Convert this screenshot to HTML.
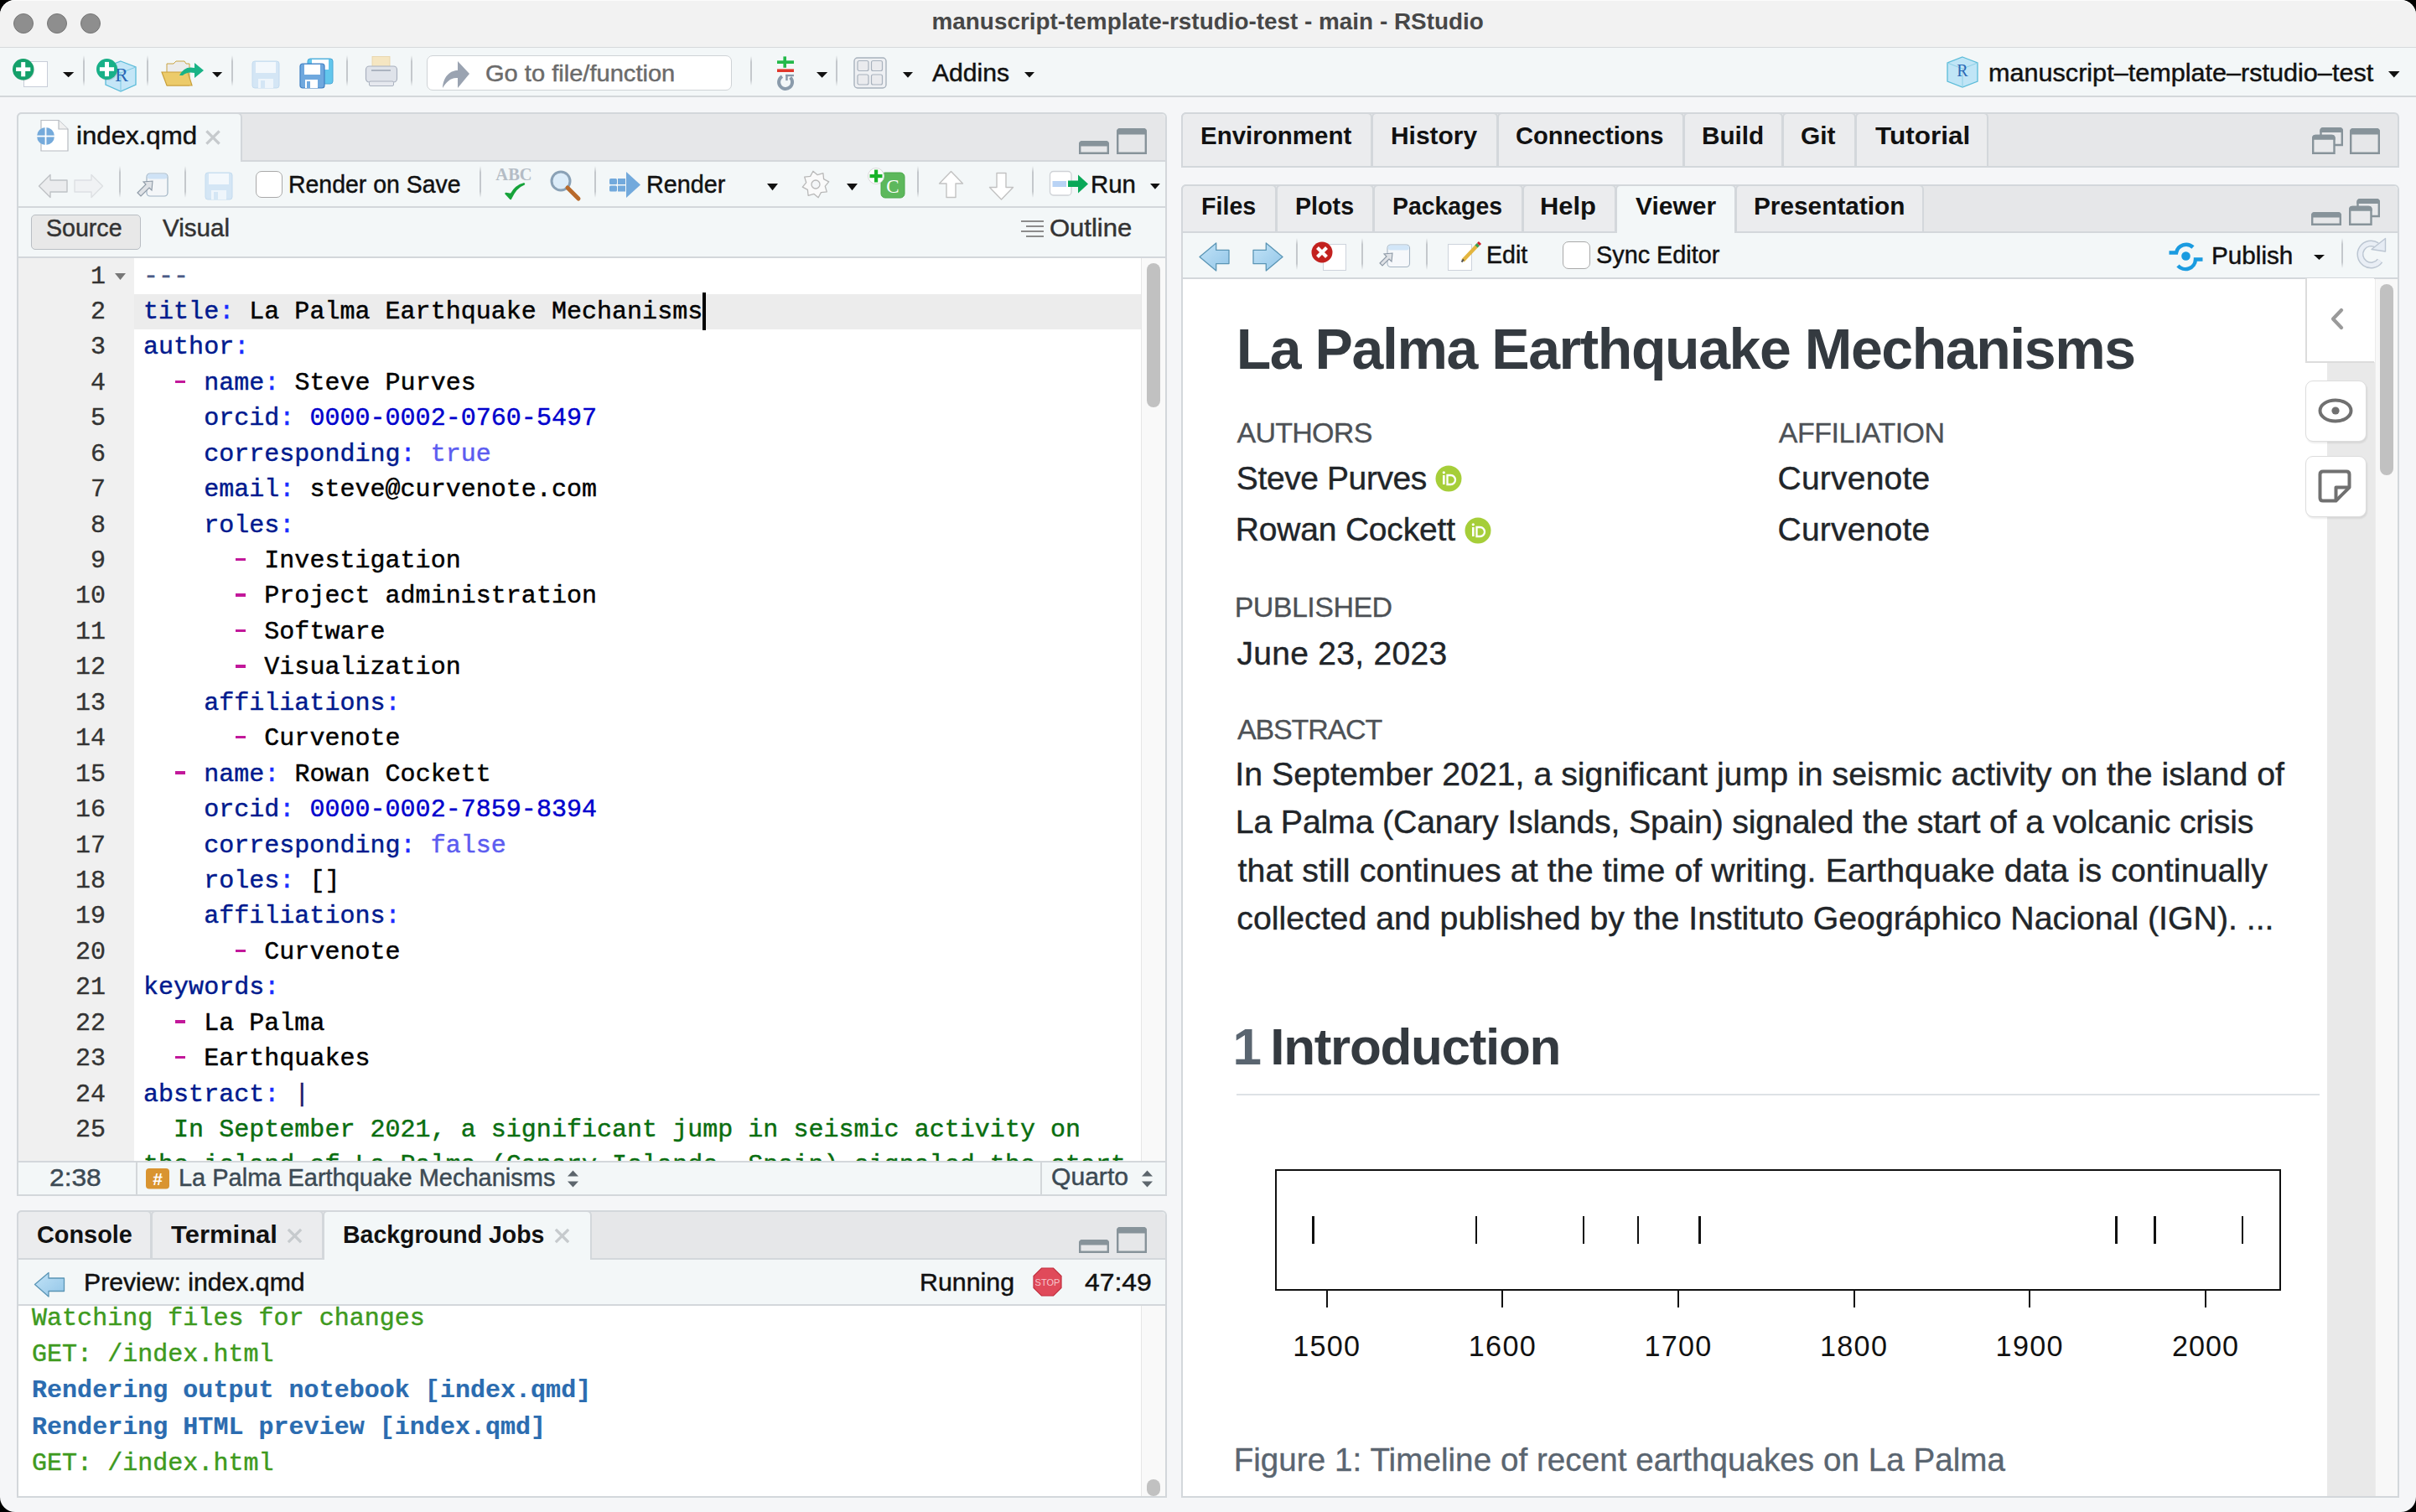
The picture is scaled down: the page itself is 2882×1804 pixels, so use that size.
<!DOCTYPE html>
<html><head><meta charset="utf-8"><title>RStudio</title>
<style>
html,body{margin:0;padding:0;}
body{width:2882px;height:1804px;overflow:hidden;background:#000;position:relative;}
.t{position:absolute;white-space:pre;line-height:1;z-index:5;}
.r{position:absolute;box-sizing:border-box;}
.s{position:absolute;overflow:visible;z-index:4;}
</style></head><body>
<div class="r" style="left:0px;top:0px;width:2882px;height:1804px;background:#f5f6f8;border-radius:18px;"></div>
<div class="r" style="left:0px;top:0px;width:2882px;height:57px;background:#f2f2f2;border-radius:18px 18px 0 0;border-bottom:1.5px solid #d6d9db;border-top:1.5px solid #fbfbfb;"></div>
<div class="r" style="left:16px;top:16px;width:24px;height:24px;border-radius:50%;background:#8e8e8e;border:1px solid #767676;"></div>
<div class="r" style="left:56px;top:16px;width:24px;height:24px;border-radius:50%;background:#8e8e8e;border:1px solid #767676;"></div>
<div class="r" style="left:96px;top:16px;width:24px;height:24px;border-radius:50%;background:#8e8e8e;border:1px solid #767676;"></div>
<div class="t" style="left:1111.56px;top:12.39px;font-size:27.88px;color:#474747;font-family:'Liberation Sans', sans-serif;font-weight:bold;">manuscript-template-rstudio-test - main - RStudio</div>
<div class="r" style="left:0px;top:57px;width:2882px;height:59px;background:#f3f7f8;border-bottom:2px solid #d3d7da;"></div>
<div class="r" style="left:20px;top:134px;width:1372px;height:1293px;background:#f3f7f8;border:2px solid #d3d7db;border-radius:6px 6px 0 0;"></div>
<div class="r" style="left:22px;top:136px;width:1368px;height:56px;background:#e6e7e9;border-radius:5px 5px 0 0;"></div>
<div class="r" style="left:20px;top:191px;width:1372px;height:2px;background:#d3d7db;"></div>
<div class="r" style="left:20px;top:246px;width:1372px;height:2px;background:#d3d7db;"></div>
<div class="r" style="left:20px;top:306px;width:1372px;height:2px;background:#d3d7db;"></div>
<div class="r" style="left:22px;top:308px;width:138px;height:1077px;background:#f0f0f0;"></div>
<div class="r" style="left:160px;top:308px;width:1201px;height:1077px;background:#ffffff;"></div>
<div class="r" style="left:1361px;top:308px;width:29px;height:1077px;background:#f9f9f9;border-left:1px solid #e6e6e6;"></div>
<div class="r" style="left:20px;top:1385px;width:1372px;height:2px;background:#d3d7db;"></div>
<div class="r" style="left:20px;top:1425px;width:1372px;height:2px;background:#d3d7db;"></div>
<div class="r" style="left:20px;top:1444px;width:1372px;height:343px;background:#f3f7f8;border:2px solid #d3d7db;border-radius:6px 6px 0 0;"></div>
<div class="r" style="left:22px;top:1446px;width:1368px;height:56px;background:#e6e7e9;border-radius:5px 5px 0 0;"></div>
<div class="r" style="left:20px;top:1501px;width:1372px;height:2px;background:#d3d7db;"></div>
<div class="r" style="left:20px;top:1556px;width:1372px;height:2px;background:#d3d7db;"></div>
<div class="r" style="left:22px;top:1558px;width:1339px;height:227px;background:#ffffff;"></div>
<div class="r" style="left:1361px;top:1558px;width:29px;height:227px;background:#f9f9f9;border-left:1px solid #e6e6e6;"></div>
<div class="r" style="left:1409px;top:134px;width:1453px;height:66px;background:#e6e7e9;border:2px solid #d3d7db;border-radius:6px 6px 0 0;"></div>
<div class="r" style="left:1409px;top:220px;width:1453px;height:1567px;background:#f3f7f8;border:2px solid #d3d7db;border-radius:6px 6px 0 0;"></div>
<div class="r" style="left:1411px;top:222px;width:1449px;height:55px;background:#e6e7e9;border-radius:5px 5px 0 0;"></div>
<div class="r" style="left:1409px;top:276px;width:1453px;height:2px;background:#d3d7db;"></div>
<div class="r" style="left:1409px;top:331px;width:1453px;height:2px;background:#d3d7db;"></div>
<div class="r" style="left:1411px;top:333px;width:1449px;height:1452px;background:#ffffff;"></div>
<div class="r" style="left:20px;top:134px;width:269px;height:59px;background:#f3f7f8;border:2px solid #d3d7db;border-bottom:none;border-radius:6px 6px 0 0;"></div>
<div class="r" style="left:20px;top:1444px;width:161px;height:59px;background:#ebecee;border:2px solid #d3d7db;border-radius:6px 6px 0 0;"></div>
<div class="r" style="left:180px;top:1444px;width:206px;height:59px;background:#ebecee;border:2px solid #d3d7db;border-radius:6px 6px 0 0;"></div>
<div class="r" style="left:385px;top:1444px;width:321px;height:59px;background:#f3f7f8;border:2px solid #d3d7db;border-bottom:none;border-radius:6px 6px 0 0;"></div>
<div class="r" style="left:1409px;top:134px;width:228px;height:66px;background:#ebecee;border:2px solid #d3d7db;border-radius:6px 6px 0 0;"></div>
<div class="r" style="left:1636px;top:134px;width:151px;height:66px;background:#ebecee;border:2px solid #d3d7db;border-radius:6px 6px 0 0;"></div>
<div class="r" style="left:1786px;top:134px;width:223px;height:66px;background:#ebecee;border:2px solid #d3d7db;border-radius:6px 6px 0 0;"></div>
<div class="r" style="left:2008px;top:134px;width:119px;height:66px;background:#ebecee;border:2px solid #d3d7db;border-radius:6px 6px 0 0;"></div>
<div class="r" style="left:2126px;top:134px;width:88px;height:66px;background:#ebecee;border:2px solid #d3d7db;border-radius:6px 6px 0 0;"></div>
<div class="r" style="left:2213px;top:134px;width:159px;height:66px;background:#ebecee;border:2px solid #d3d7db;border-radius:6px 6px 0 0;"></div>
<div class="r" style="left:1409px;top:220px;width:114px;height:58px;background:#ebecee;border:2px solid #d3d7db;border-radius:6px 6px 0 0;"></div>
<div class="r" style="left:1522px;top:220px;width:117px;height:58px;background:#ebecee;border:2px solid #d3d7db;border-radius:6px 6px 0 0;"></div>
<div class="r" style="left:1638px;top:220px;width:179px;height:58px;background:#ebecee;border:2px solid #d3d7db;border-radius:6px 6px 0 0;"></div>
<div class="r" style="left:1816px;top:220px;width:112px;height:58px;background:#ebecee;border:2px solid #d3d7db;border-radius:6px 6px 0 0;"></div>
<div class="r" style="left:1927px;top:220px;width:144px;height:58px;background:#f3f7f8;border:2px solid #d3d7db;border-bottom:none;border-radius:6px 6px 0 0;"></div>
<div class="r" style="left:2070px;top:220px;width:225px;height:58px;background:#ebecee;border:2px solid #d3d7db;border-radius:6px 6px 0 0;"></div>
<div class="t" style="left:578.54px;top:74.33px;font-size:27.60px;color:#6b6b6b;font-family:'Liberation Sans', sans-serif;transform:scaleX(1.0538);transform-origin:0 0;-webkit-text-stroke:0.45px #6b6b6b;">Go to file/function</div>
<div class="t" style="left:1111.54px;top:71.69px;font-size:29.30px;color:#111;font-family:'Liberation Sans', sans-serif;transform:scaleX(1.0285);transform-origin:0 0;-webkit-text-stroke:0.45px #111;">Addins</div>
<div class="t" style="left:2371.97px;top:71.69px;font-size:29.30px;color:#111;font-family:'Liberation Sans', sans-serif;transform:scaleX(1.0444);transform-origin:0 0;-webkit-text-stroke:0.45px #111;">manuscript–template–rstudio–test</div>
<div class="t" style="left:91.21px;top:147.39px;font-size:29.30px;color:#111;font-family:'Liberation Sans', sans-serif;transform:scaleX(1.0659);transform-origin:0 0;-webkit-text-stroke:0.45px #111;">index.qmd</div>
<div class="t" style="left:343.67px;top:205.19px;font-size:29.30px;color:#111;font-family:'Liberation Sans', sans-serif;transform:scaleX(0.9709);transform-origin:0 0;-webkit-text-stroke:0.45px #111;">Render on Save</div>
<div class="t" style="left:770.64px;top:204.99px;font-size:29.30px;color:#111;font-family:'Liberation Sans', sans-serif;transform:scaleX(0.9816);transform-origin:0 0;-webkit-text-stroke:0.45px #111;">Render</div>
<div class="t" style="left:1300.99px;top:204.99px;font-size:29.30px;color:#111;font-family:'Liberation Sans', sans-serif;transform:scaleX(1.0031);transform-origin:0 0;-webkit-text-stroke:0.45px #111;">Run</div>
<div class="t" style="left:55.30px;top:256.79px;font-size:29.30px;color:#333;font-family:'Liberation Sans', sans-serif;transform:scaleX(0.9756);transform-origin:0 0;-webkit-text-stroke:0.45px #333;">Source</div>
<div class="t" style="left:193.57px;top:256.79px;font-size:29.30px;color:#333;font-family:'Liberation Sans', sans-serif;transform:scaleX(1.0105);transform-origin:0 0;-webkit-text-stroke:0.45px #333;">Visual</div>
<div class="t" style="left:1252.13px;top:257.19px;font-size:29.30px;color:#333;font-family:'Liberation Sans', sans-serif;transform:scaleX(1.0582);transform-origin:0 0;-webkit-text-stroke:0.45px #333;">Outline</div>
<div class="t" style="left:59.40px;top:1390.49px;font-size:29.30px;color:#3c4a54;font-family:'Liberation Sans', sans-serif;transform:scaleX(1.0832);transform-origin:0 0;-webkit-text-stroke:0.45px #3c4a54;">2:38</div>
<div class="t" style="left:212.62px;top:1390.49px;font-size:29.30px;color:#3c4a54;font-family:'Liberation Sans', sans-serif;transform:scaleX(0.9891);transform-origin:0 0;-webkit-text-stroke:0.45px #3c4a54;">La Palma Earthquake Mechanisms</div>
<div class="t" style="left:1254.27px;top:1389.19px;font-size:29.30px;color:#3c4a54;font-family:'Liberation Sans', sans-serif;transform:scaleX(1.0269);transform-origin:0 0;-webkit-text-stroke:0.45px #3c4a54;">Quarto</div>
<div class="t" style="left:43.52px;top:1457.77px;font-size:29.80px;color:#111;font-family:'Liberation Sans', sans-serif;font-weight:bold;transform:scaleX(0.9686);transform-origin:0 0;">Console</div>
<div class="t" style="left:203.65px;top:1457.77px;font-size:29.80px;color:#111;font-family:'Liberation Sans', sans-serif;font-weight:bold;transform:scaleX(1.0405);transform-origin:0 0;">Terminal</div>
<div class="t" style="left:408.70px;top:1457.77px;font-size:29.80px;color:#111;font-family:'Liberation Sans', sans-serif;font-weight:bold;transform:scaleX(0.9554);transform-origin:0 0;">Background Jobs</div>
<div class="t" style="left:100.32px;top:1514.99px;font-size:29.30px;color:#111;font-family:'Liberation Sans', sans-serif;transform:scaleX(1.0311);transform-origin:0 0;-webkit-text-stroke:0.45px #111;">Preview: index.qmd</div>
<div class="t" style="left:1096.81px;top:1514.99px;font-size:29.30px;color:#111;font-family:'Liberation Sans', sans-serif;transform:scaleX(1.0366);transform-origin:0 0;-webkit-text-stroke:0.45px #111;">Running</div>
<div class="t" style="left:1293.77px;top:1514.99px;font-size:29.30px;color:#111;font-family:'Liberation Sans', sans-serif;transform:scaleX(1.0875);transform-origin:0 0;-webkit-text-stroke:0.45px #111;">47:49</div>
<div class="t" style="left:1432.03px;top:147.17px;font-size:29.80px;color:#111;font-family:'Liberation Sans', sans-serif;font-weight:bold;transform:scaleX(0.9901);transform-origin:0 0;">Environment</div>
<div class="t" style="left:1659.00px;top:147.17px;font-size:29.80px;color:#111;font-family:'Liberation Sans', sans-serif;font-weight:bold;transform:scaleX(1.0048);transform-origin:0 0;">History</div>
<div class="t" style="left:1808.40px;top:147.17px;font-size:29.80px;color:#111;font-family:'Liberation Sans', sans-serif;font-weight:bold;transform:scaleX(0.9785);transform-origin:0 0;">Connections</div>
<div class="t" style="left:2029.51px;top:147.17px;font-size:29.80px;color:#111;font-family:'Liberation Sans', sans-serif;font-weight:bold;transform:scaleX(0.9967);transform-origin:0 0;">Build</div>
<div class="t" style="left:2148.37px;top:147.17px;font-size:29.80px;color:#111;font-family:'Liberation Sans', sans-serif;font-weight:bold;transform:scaleX(1.0026);transform-origin:0 0;">Git</div>
<div class="t" style="left:2236.65px;top:147.17px;font-size:29.80px;color:#111;font-family:'Liberation Sans', sans-serif;font-weight:bold;transform:scaleX(1.0573);transform-origin:0 0;">Tutorial</div>
<div class="t" style="left:1432.88px;top:231.47px;font-size:29.80px;color:#111;font-family:'Liberation Sans', sans-serif;font-weight:bold;transform:scaleX(0.9614);transform-origin:0 0;">Files</div>
<div class="t" style="left:1544.68px;top:231.47px;font-size:29.80px;color:#111;font-family:'Liberation Sans', sans-serif;font-weight:bold;transform:scaleX(0.9621);transform-origin:0 0;">Plots</div>
<div class="t" style="left:1661.10px;top:231.47px;font-size:29.80px;color:#111;font-family:'Liberation Sans', sans-serif;font-weight:bold;transform:scaleX(0.9530);transform-origin:0 0;">Packages</div>
<div class="t" style="left:1837.33px;top:231.47px;font-size:29.80px;color:#111;font-family:'Liberation Sans', sans-serif;font-weight:bold;transform:scaleX(1.0365);transform-origin:0 0;">Help</div>
<div class="t" style="left:1950.80px;top:231.47px;font-size:29.80px;color:#111;font-family:'Liberation Sans', sans-serif;font-weight:bold;transform:scaleX(1.0054);transform-origin:0 0;">Viewer</div>
<div class="t" style="left:2092.00px;top:231.47px;font-size:29.80px;color:#111;font-family:'Liberation Sans', sans-serif;font-weight:bold;">Presentation</div>
<div class="t" style="left:1773.46px;top:289.19px;font-size:29.30px;color:#111;font-family:'Liberation Sans', sans-serif;transform:scaleX(0.9734);transform-origin:0 0;-webkit-text-stroke:0.45px #111;">Edit</div>
<div class="t" style="left:1903.69px;top:289.19px;font-size:29.30px;color:#111;font-family:'Liberation Sans', sans-serif;transform:scaleX(0.9837);transform-origin:0 0;-webkit-text-stroke:0.45px #111;">Sync Editor</div>
<div class="t" style="left:2637.56px;top:290.19px;font-size:29.30px;color:#111;font-family:'Liberation Sans', sans-serif;transform:scaleX(1.0131);transform-origin:0 0;-webkit-text-stroke:0.45px #111;">Publish</div>
<div class="r" style="left:160px;top:351px;width:1201px;height:42px;background:#ececec;"></div>
<div class="r" style="left:838px;top:349px;width:4px;height:45px;background:#000;"></div>
<div class="r" style="left:0;top:0;width:2882px;height:1385px;overflow:hidden;clip-path:inset(307px 0 0 0);"><div class="t" style="left:171.0px;top:314.62px;font-family:'Liberation Mono',monospace;font-size:30.0px;letter-spacing:0.030px;-webkit-text-stroke-width:0.45px;"><span style="color:#4a5a86">---</span></div><div class="t" style="left:171.0px;top:357.05px;font-family:'Liberation Mono',monospace;font-size:30.0px;letter-spacing:0.030px;-webkit-text-stroke-width:0.45px;"><span style="color:#001a8e">title</span><span style="color:#1a2cff">:</span><span style="color:#000"> La Palma Earthquake Mechanisms</span></div><div class="t" style="left:171.0px;top:399.48px;font-family:'Liberation Mono',monospace;font-size:30.0px;letter-spacing:0.030px;-webkit-text-stroke-width:0.45px;"><span style="color:#001a8e">author</span><span style="color:#1a2cff">:</span></div><div class="t" style="left:171.0px;top:441.91px;font-family:'Liberation Mono',monospace;font-size:30.0px;letter-spacing:0.030px;-webkit-text-stroke-width:0.45px;"><span style="color:#000">  </span> <span style="color:#000"> </span><span style="color:#001a8e">name</span><span style="color:#1a2cff">:</span><span style="color:#000"> Steve Purves</span></div><div class="t" style="left:171.0px;top:484.34px;font-family:'Liberation Mono',monospace;font-size:30.0px;letter-spacing:0.030px;-webkit-text-stroke-width:0.45px;"><span style="color:#001a8e">    orcid</span><span style="color:#1a2cff">:</span><span style="color:#000"> </span><span style="color:#0000cd">0000-0002-0760-5497</span></div><div class="t" style="left:171.0px;top:526.77px;font-family:'Liberation Mono',monospace;font-size:30.0px;letter-spacing:0.030px;-webkit-text-stroke-width:0.45px;"><span style="color:#001a8e">    corresponding</span><span style="color:#1a2cff">:</span><span style="color:#000"> </span><span style="color:#5c5cf0">true</span></div><div class="t" style="left:171.0px;top:569.20px;font-family:'Liberation Mono',monospace;font-size:30.0px;letter-spacing:0.030px;-webkit-text-stroke-width:0.45px;"><span style="color:#001a8e">    email</span><span style="color:#1a2cff">:</span><span style="color:#000"> steve@curvenote.com</span></div><div class="t" style="left:171.0px;top:611.63px;font-family:'Liberation Mono',monospace;font-size:30.0px;letter-spacing:0.030px;-webkit-text-stroke-width:0.45px;"><span style="color:#001a8e">    roles</span><span style="color:#1a2cff">:</span></div><div class="t" style="left:171.0px;top:654.06px;font-family:'Liberation Mono',monospace;font-size:30.0px;letter-spacing:0.030px;-webkit-text-stroke-width:0.45px;"><span style="color:#000">      </span> <span style="color:#000"> Investigation</span></div><div class="t" style="left:171.0px;top:696.49px;font-family:'Liberation Mono',monospace;font-size:30.0px;letter-spacing:0.030px;-webkit-text-stroke-width:0.45px;"><span style="color:#000">      </span> <span style="color:#000"> Project administration</span></div><div class="t" style="left:171.0px;top:738.92px;font-family:'Liberation Mono',monospace;font-size:30.0px;letter-spacing:0.030px;-webkit-text-stroke-width:0.45px;"><span style="color:#000">      </span> <span style="color:#000"> Software</span></div><div class="t" style="left:171.0px;top:781.35px;font-family:'Liberation Mono',monospace;font-size:30.0px;letter-spacing:0.030px;-webkit-text-stroke-width:0.45px;"><span style="color:#000">      </span> <span style="color:#000"> Visualization</span></div><div class="t" style="left:171.0px;top:823.78px;font-family:'Liberation Mono',monospace;font-size:30.0px;letter-spacing:0.030px;-webkit-text-stroke-width:0.45px;"><span style="color:#001a8e">    affiliations</span><span style="color:#1a2cff">:</span></div><div class="t" style="left:171.0px;top:866.21px;font-family:'Liberation Mono',monospace;font-size:30.0px;letter-spacing:0.030px;-webkit-text-stroke-width:0.45px;"><span style="color:#000">      </span> <span style="color:#000"> Curvenote</span></div><div class="t" style="left:171.0px;top:908.64px;font-family:'Liberation Mono',monospace;font-size:30.0px;letter-spacing:0.030px;-webkit-text-stroke-width:0.45px;"><span style="color:#000">  </span> <span style="color:#000"> </span><span style="color:#001a8e">name</span><span style="color:#1a2cff">:</span><span style="color:#000"> Rowan Cockett</span></div><div class="t" style="left:171.0px;top:951.07px;font-family:'Liberation Mono',monospace;font-size:30.0px;letter-spacing:0.030px;-webkit-text-stroke-width:0.45px;"><span style="color:#001a8e">    orcid</span><span style="color:#1a2cff">:</span><span style="color:#000"> </span><span style="color:#0000cd">0000-0002-7859-8394</span></div><div class="t" style="left:171.0px;top:993.50px;font-family:'Liberation Mono',monospace;font-size:30.0px;letter-spacing:0.030px;-webkit-text-stroke-width:0.45px;"><span style="color:#001a8e">    corresponding</span><span style="color:#1a2cff">:</span><span style="color:#000"> </span><span style="color:#5c5cf0">false</span></div><div class="t" style="left:171.0px;top:1035.93px;font-family:'Liberation Mono',monospace;font-size:30.0px;letter-spacing:0.030px;-webkit-text-stroke-width:0.45px;"><span style="color:#001a8e">    roles</span><span style="color:#1a2cff">:</span><span style="color:#000"> []</span></div><div class="t" style="left:171.0px;top:1078.36px;font-family:'Liberation Mono',monospace;font-size:30.0px;letter-spacing:0.030px;-webkit-text-stroke-width:0.45px;"><span style="color:#001a8e">    affiliations</span><span style="color:#1a2cff">:</span></div><div class="t" style="left:171.0px;top:1120.79px;font-family:'Liberation Mono',monospace;font-size:30.0px;letter-spacing:0.030px;-webkit-text-stroke-width:0.45px;"><span style="color:#000">      </span> <span style="color:#000"> Curvenote</span></div><div class="t" style="left:171.0px;top:1163.22px;font-family:'Liberation Mono',monospace;font-size:30.0px;letter-spacing:0.030px;-webkit-text-stroke-width:0.45px;"><span style="color:#001a8e">keywords</span><span style="color:#1a2cff">:</span></div><div class="t" style="left:171.0px;top:1205.65px;font-family:'Liberation Mono',monospace;font-size:30.0px;letter-spacing:0.030px;-webkit-text-stroke-width:0.45px;"><span style="color:#000">  </span> <span style="color:#000"> La Palma</span></div><div class="t" style="left:171.0px;top:1248.08px;font-family:'Liberation Mono',monospace;font-size:30.0px;letter-spacing:0.030px;-webkit-text-stroke-width:0.45px;"><span style="color:#000">  </span> <span style="color:#000"> Earthquakes</span></div><div class="t" style="left:171.0px;top:1290.51px;font-family:'Liberation Mono',monospace;font-size:30.0px;letter-spacing:0.030px;-webkit-text-stroke-width:0.45px;"><span style="color:#001a8e">abstract</span><span style="color:#1a2cff">:</span><span style="color:#000"> </span><span style="color:#1a1a6e">|</span></div><div class="t" style="left:171.0px;top:1332.94px;font-family:'Liberation Mono',monospace;font-size:30.0px;letter-spacing:0.030px;-webkit-text-stroke-width:0.45px;"><span style="color:#0a6e10">  In September 2021, a significant jump in seismic activity on</span></div><div class="t" style="left:171.0px;top:1375.37px;font-family:'Liberation Mono',monospace;font-size:30.0px;letter-spacing:0.030px;-webkit-text-stroke-width:0.45px;"><span style="color:#0a6e10">the island of La Palma (Canary Islands, Spain) signaled the start</span></div></div>
<div class="r" style="left:208.66px;top:453.69px;width:12.200000000000017px;height:3.3999999999999773px;background:#c2189a;"></div>
<div class="r" style="left:280.78px;top:665.84px;width:12.200000000000045px;height:3.3999999999999773px;background:#c2189a;"></div>
<div class="r" style="left:280.78px;top:708.27px;width:12.200000000000045px;height:3.3999999999999773px;background:#c2189a;"></div>
<div class="r" style="left:280.78px;top:750.7px;width:12.200000000000045px;height:3.3999999999999773px;background:#c2189a;"></div>
<div class="r" style="left:280.78px;top:793.13px;width:12.200000000000045px;height:3.3999999999999773px;background:#c2189a;"></div>
<div class="r" style="left:280.78px;top:877.99px;width:12.200000000000045px;height:3.3999999999999773px;background:#c2189a;"></div>
<div class="r" style="left:208.66px;top:920.42px;width:12.200000000000017px;height:3.400000000000091px;background:#c2189a;"></div>
<div class="r" style="left:280.78px;top:1132.57px;width:12.200000000000045px;height:3.400000000000091px;background:#c2189a;"></div>
<div class="r" style="left:208.66px;top:1217.43px;width:12.200000000000017px;height:3.3999999999998636px;background:#c2189a;"></div>
<div class="r" style="left:208.66px;top:1259.86px;width:12.200000000000017px;height:3.400000000000091px;background:#c2189a;"></div>
<div class="t" style="left:107.97px;top:314.62px;font-family:'Liberation Mono',monospace;font-size:30.0px;letter-spacing:0.030px;color:#333;-webkit-text-stroke-width:0.35px;">1</div>
<div class="t" style="left:107.97px;top:357.05px;font-family:'Liberation Mono',monospace;font-size:30.0px;letter-spacing:0.030px;color:#333;-webkit-text-stroke-width:0.35px;">2</div>
<div class="t" style="left:107.97px;top:399.48px;font-family:'Liberation Mono',monospace;font-size:30.0px;letter-spacing:0.030px;color:#333;-webkit-text-stroke-width:0.35px;">3</div>
<div class="t" style="left:107.97px;top:441.91px;font-family:'Liberation Mono',monospace;font-size:30.0px;letter-spacing:0.030px;color:#333;-webkit-text-stroke-width:0.35px;">4</div>
<div class="t" style="left:107.97px;top:484.34px;font-family:'Liberation Mono',monospace;font-size:30.0px;letter-spacing:0.030px;color:#333;-webkit-text-stroke-width:0.35px;">5</div>
<div class="t" style="left:107.97px;top:526.77px;font-family:'Liberation Mono',monospace;font-size:30.0px;letter-spacing:0.030px;color:#333;-webkit-text-stroke-width:0.35px;">6</div>
<div class="t" style="left:107.97px;top:569.20px;font-family:'Liberation Mono',monospace;font-size:30.0px;letter-spacing:0.030px;color:#333;-webkit-text-stroke-width:0.35px;">7</div>
<div class="t" style="left:107.97px;top:611.63px;font-family:'Liberation Mono',monospace;font-size:30.0px;letter-spacing:0.030px;color:#333;-webkit-text-stroke-width:0.35px;">8</div>
<div class="t" style="left:107.97px;top:654.06px;font-family:'Liberation Mono',monospace;font-size:30.0px;letter-spacing:0.030px;color:#333;-webkit-text-stroke-width:0.35px;">9</div>
<div class="t" style="left:89.94px;top:696.49px;font-family:'Liberation Mono',monospace;font-size:30.0px;letter-spacing:0.030px;color:#333;-webkit-text-stroke-width:0.35px;">10</div>
<div class="t" style="left:89.94px;top:738.92px;font-family:'Liberation Mono',monospace;font-size:30.0px;letter-spacing:0.030px;color:#333;-webkit-text-stroke-width:0.35px;">11</div>
<div class="t" style="left:89.94px;top:781.35px;font-family:'Liberation Mono',monospace;font-size:30.0px;letter-spacing:0.030px;color:#333;-webkit-text-stroke-width:0.35px;">12</div>
<div class="t" style="left:89.94px;top:823.78px;font-family:'Liberation Mono',monospace;font-size:30.0px;letter-spacing:0.030px;color:#333;-webkit-text-stroke-width:0.35px;">13</div>
<div class="t" style="left:89.94px;top:866.21px;font-family:'Liberation Mono',monospace;font-size:30.0px;letter-spacing:0.030px;color:#333;-webkit-text-stroke-width:0.35px;">14</div>
<div class="t" style="left:89.94px;top:908.64px;font-family:'Liberation Mono',monospace;font-size:30.0px;letter-spacing:0.030px;color:#333;-webkit-text-stroke-width:0.35px;">15</div>
<div class="t" style="left:89.94px;top:951.07px;font-family:'Liberation Mono',monospace;font-size:30.0px;letter-spacing:0.030px;color:#333;-webkit-text-stroke-width:0.35px;">16</div>
<div class="t" style="left:89.94px;top:993.50px;font-family:'Liberation Mono',monospace;font-size:30.0px;letter-spacing:0.030px;color:#333;-webkit-text-stroke-width:0.35px;">17</div>
<div class="t" style="left:89.94px;top:1035.93px;font-family:'Liberation Mono',monospace;font-size:30.0px;letter-spacing:0.030px;color:#333;-webkit-text-stroke-width:0.35px;">18</div>
<div class="t" style="left:89.94px;top:1078.36px;font-family:'Liberation Mono',monospace;font-size:30.0px;letter-spacing:0.030px;color:#333;-webkit-text-stroke-width:0.35px;">19</div>
<div class="t" style="left:89.94px;top:1120.79px;font-family:'Liberation Mono',monospace;font-size:30.0px;letter-spacing:0.030px;color:#333;-webkit-text-stroke-width:0.35px;">20</div>
<div class="t" style="left:89.94px;top:1163.22px;font-family:'Liberation Mono',monospace;font-size:30.0px;letter-spacing:0.030px;color:#333;-webkit-text-stroke-width:0.35px;">21</div>
<div class="t" style="left:89.94px;top:1205.65px;font-family:'Liberation Mono',monospace;font-size:30.0px;letter-spacing:0.030px;color:#333;-webkit-text-stroke-width:0.35px;">22</div>
<div class="t" style="left:89.94px;top:1248.08px;font-family:'Liberation Mono',monospace;font-size:30.0px;letter-spacing:0.030px;color:#333;-webkit-text-stroke-width:0.35px;">23</div>
<div class="t" style="left:89.94px;top:1290.51px;font-family:'Liberation Mono',monospace;font-size:30.0px;letter-spacing:0.030px;color:#333;-webkit-text-stroke-width:0.35px;">24</div>
<div class="t" style="left:89.94px;top:1332.94px;font-family:'Liberation Mono',monospace;font-size:30.0px;letter-spacing:0.030px;color:#333;-webkit-text-stroke-width:0.35px;">25</div>
<svg class="s" style="left:137px;top:325.5px;" width="13" height="8.0" viewBox="0 0 13 8.0"><path d="M0 0H13L6.5 8.0Z" fill="#777"/></svg>
<div class="t" style="left:38px;top:1558.02px;font-family:'Liberation Mono',monospace;font-size:30.0px;letter-spacing:0.030px;color:#3e9a1e;font-weight:normal;-webkit-text-stroke-width:0.45px;">Watching files for changes</div>
<div class="t" style="left:38px;top:1601.22px;font-family:'Liberation Mono',monospace;font-size:30.0px;letter-spacing:0.030px;color:#3e9a1e;font-weight:normal;-webkit-text-stroke-width:0.45px;">GET: /index.html</div>
<div class="t" style="left:38px;top:1644.42px;font-family:'Liberation Mono',monospace;font-size:30.0px;letter-spacing:0.030px;color:#2b6cb0;font-weight:bold;-webkit-text-stroke-width:0.2px;">Rendering output notebook [index.qmd]</div>
<div class="t" style="left:38px;top:1687.62px;font-family:'Liberation Mono',monospace;font-size:30.0px;letter-spacing:0.030px;color:#2b6cb0;font-weight:bold;-webkit-text-stroke-width:0.2px;">Rendering HTML preview [index.qmd]</div>
<div class="t" style="left:38px;top:1730.82px;font-family:'Liberation Mono',monospace;font-size:30.0px;letter-spacing:0.030px;color:#3e9a1e;font-weight:normal;-webkit-text-stroke-width:0.45px;">GET: /index.html</div>
<div class="t" style="left:1474.65px;top:382.23px;font-size:68.00px;color:#343a40;font-family:'Liberation Sans', sans-serif;font-weight:bold;letter-spacing:-1.43px;">La Palma Earthquake Mechanisms</div>
<div class="t" style="left:1475.43px;top:499.21px;font-size:34.00px;color:#4d5156;font-family:'Liberation Sans', sans-serif;letter-spacing:-0.72px;-webkit-text-stroke:0.3px #4d5156;">AUTHORS</div>
<div class="t" style="left:2121.73px;top:499.21px;font-size:34.00px;color:#4d5156;font-family:'Liberation Sans', sans-serif;letter-spacing:-0.50px;-webkit-text-stroke:0.3px #4d5156;">AFFILIATION</div>
<div class="t" style="left:1474.83px;top:550.58px;font-size:39.00px;color:#212529;font-family:'Liberation Sans', sans-serif;letter-spacing:-0.40px;-webkit-text-stroke:0.4px #212529;">Steve Purves</div>
<div class="t" style="left:1473.80px;top:611.98px;font-size:39.00px;color:#212529;font-family:'Liberation Sans', sans-serif;letter-spacing:-0.19px;-webkit-text-stroke:0.4px #212529;">Rowan Cockett</div>
<div class="t" style="left:2120.52px;top:550.58px;font-size:39.00px;color:#212529;font-family:'Liberation Sans', sans-serif;letter-spacing:0.22px;-webkit-text-stroke:0.4px #212529;">Curvenote</div>
<div class="t" style="left:2120.52px;top:611.98px;font-size:39.00px;color:#212529;font-family:'Liberation Sans', sans-serif;letter-spacing:0.22px;-webkit-text-stroke:0.4px #212529;">Curvenote</div>
<div class="t" style="left:1472.71px;top:707.21px;font-size:34.00px;color:#4d5156;font-family:'Liberation Sans', sans-serif;letter-spacing:-0.54px;-webkit-text-stroke:0.3px #4d5156;">PUBLISHED</div>
<div class="t" style="left:1475.39px;top:759.78px;font-size:39.00px;color:#212529;font-family:'Liberation Sans', sans-serif;letter-spacing:0.31px;-webkit-text-stroke:0.4px #212529;">June 23, 2023</div>
<div class="t" style="left:1475.93px;top:853.01px;font-size:34.00px;color:#4d5156;font-family:'Liberation Sans', sans-serif;letter-spacing:-1.14px;-webkit-text-stroke:0.3px #4d5156;">ABSTRACT</div>
<div class="t" style="left:1473.37px;top:904.23px;font-size:39.30px;color:#212529;font-family:'Liberation Sans', sans-serif;-webkit-text-stroke:0.4px #212529;">In September 2021, a significant jump in seismic activity on the island of</div>
<div class="t" style="left:1473.78px;top:961.43px;font-size:39.30px;color:#212529;font-family:'Liberation Sans', sans-serif;letter-spacing:-0.18px;-webkit-text-stroke:0.4px #212529;">La Palma (Canary Islands, Spain) signaled the start of a volcanic crisis</div>
<div class="t" style="left:1476.41px;top:1018.63px;font-size:39.30px;color:#212529;font-family:'Liberation Sans', sans-serif;letter-spacing:0.10px;-webkit-text-stroke:0.4px #212529;">that still continues at the time of writing. Earthquake data is continually</div>
<div class="t" style="left:1475.33px;top:1075.83px;font-size:39.30px;color:#212529;font-family:'Liberation Sans', sans-serif;letter-spacing:-0.02px;-webkit-text-stroke:0.4px #212529;">collected and published by the Instituto Geográphico Nacional (IGN). ...</div>
<div class="t" style="left:1470.59px;top:1217.51px;font-size:62.00px;color:#5a6570;font-family:'Liberation Sans', sans-serif;font-weight:bold;">1</div>
<div class="t" style="left:1515.35px;top:1217.51px;font-size:62.00px;color:#343a40;font-family:'Liberation Sans', sans-serif;font-weight:bold;letter-spacing:-1.33px;">Introduction</div>
<div class="r" style="left:1475px;top:1305px;width:1292px;height:2px;background:#dee2e6;"></div>
<div class="r" style="left:1521px;top:1394.5px;width:1200px;height:145.0px;border:2.2px solid #111;"></div>
<div class="r" style="left:1565.4px;top:1450.5px;width:2.599999999999909px;height:33.5px;background:#111;"></div>
<div class="r" style="left:1759.7px;top:1450.5px;width:2.599999999999909px;height:33.5px;background:#111;"></div>
<div class="r" style="left:1887.7px;top:1450.5px;width:2.599999999999909px;height:33.5px;background:#111;"></div>
<div class="r" style="left:1952.7px;top:1450.5px;width:2.599999999999909px;height:33.5px;background:#111;"></div>
<div class="r" style="left:2026.3px;top:1450.5px;width:2.599999999999909px;height:33.5px;background:#111;"></div>
<div class="r" style="left:2523.1px;top:1450.5px;width:2.600000000000364px;height:33.5px;background:#111;"></div>
<div class="r" style="left:2569.2px;top:1450.5px;width:2.600000000000364px;height:33.5px;background:#111;"></div>
<div class="r" style="left:2673.7px;top:1450.5px;width:2.600000000000364px;height:33.5px;background:#111;"></div>
<div class="r" style="left:1581.7px;top:1538px;width:2.199999999999818px;height:22px;background:#111;"></div>
<div class="t" style="left:1542.19px;top:1589.04px;font-size:34.20px;color:#111;font-family:'Liberation Sans', sans-serif;letter-spacing:1.29px;">1500</div>
<div class="r" style="left:1791.3px;top:1538px;width:2.199999999999818px;height:22px;background:#111;"></div>
<div class="t" style="left:1751.79px;top:1589.04px;font-size:34.20px;color:#111;font-family:'Liberation Sans', sans-serif;letter-spacing:1.29px;">1600</div>
<div class="r" style="left:2000.9px;top:1538px;width:2.199999999999818px;height:22px;background:#111;"></div>
<div class="t" style="left:1961.39px;top:1589.04px;font-size:34.20px;color:#111;font-family:'Liberation Sans', sans-serif;letter-spacing:1.29px;">1700</div>
<div class="r" style="left:2210.5px;top:1538px;width:2.199999999999818px;height:22px;background:#111;"></div>
<div class="t" style="left:2170.99px;top:1589.04px;font-size:34.20px;color:#111;font-family:'Liberation Sans', sans-serif;letter-spacing:1.29px;">1800</div>
<div class="r" style="left:2420.1px;top:1538px;width:2.199999999999818px;height:22px;background:#111;"></div>
<div class="t" style="left:2380.59px;top:1589.04px;font-size:34.20px;color:#111;font-family:'Liberation Sans', sans-serif;letter-spacing:1.29px;">1900</div>
<div class="r" style="left:2629.7000000000003px;top:1538px;width:2.199999999999818px;height:22px;background:#111;"></div>
<div class="t" style="left:2591.08px;top:1589.04px;font-size:34.20px;color:#111;font-family:'Liberation Sans', sans-serif;letter-spacing:0.99px;">2000</div>
<div class="t" style="left:1471.63px;top:1723.32px;font-size:38.60px;color:#5a6570;font-family:'Liberation Sans', sans-serif;letter-spacing:0.05px;-webkit-text-stroke:0.35px #5a6570;">Figure 1: Timeline of recent earthquakes on La Palma</div>
<div class="r" style="left:28.3px;top:73px;width:29.099999999999998px;height:31.299999999999997px;background:#fff;border:1.2px solid #c8cdd8;"></div>
<svg class="s" style="left:13.900000000000002px;top:68.7px" width="29.4" height="29.4" viewBox="-13.7 -13.7 29.4 29.4"><circle cx="0.8" cy="0.8" r="12.7" fill="rgba(0,0,0,0.12)"/><circle cx="0" cy="0" r="12.7" fill="#14a06a"/><rect x="-2.5" y="-8.6" width="5" height="17.2" fill="#fff"/><rect x="-8.6" y="-2.3" width="17.2" height="4.6" fill="#fff"/></svg>
<svg class="s" style="left:75px;top:85.7px;" width="13.299999999999997" height="6.299999999999997" viewBox="0 0 13.299999999999997 6.299999999999997"><path d="M0 0H13.299999999999997L6.649999999999999 6.299999999999997Z" fill="#111"/></svg>
<div class="r" style="left:98.5px;top:66px;width:2.0px;height:37px;background:linear-gradient(to bottom, rgba(200,204,208,0), #c4c8cc 20%, #c4c8cc 80%, rgba(200,204,208,0));"></div>
<svg class="s" style="left:125px;top:72px;" width="39" height="39" viewBox="0 0 39 39"><path d="M19 1 L37 8 L37 29 L19 37 L1 29 L1 8 Z" fill="#c4e6f7" stroke="#5bbcd9" stroke-width="1.3"/><path d="M1 8 L19 15 L37 8 M19 15 L19 37" fill="none" stroke="#7cc9e2" stroke-width="1"/><text x="20" y="24.5" font-family="Liberation Serif,serif" font-size="24" fill="#2a68b5" text-anchor="middle">R</text></svg>
<svg class="s" style="left:113.5px;top:68.9px" width="29.0" height="29.0" viewBox="-13.5 -13.5 29.0 29.0"><circle cx="0.8" cy="0.8" r="12.5" fill="rgba(0,0,0,0.12)"/><circle cx="0" cy="0" r="12.5" fill="#18b088"/><rect x="-2.5" y="-8.6" width="5" height="17.2" fill="#fff"/><rect x="-8.6" y="-2.3" width="17.2" height="4.6" fill="#fff"/></svg>
<div class="r" style="left:175px;top:66px;width:2px;height:37px;background:linear-gradient(to bottom, rgba(200,204,208,0), #c4c8cc 20%, #c4c8cc 80%, rgba(200,204,208,0));"></div>
<svg class="s" style="left:192px;top:72px;" width="53" height="33" viewBox="0 0 53 33"><path d="M7 4 L15 4 L18 1 L28 1 L30 4 L34 4 L34 30 L7 30 Z" fill="#ececec" stroke="#c8a240" stroke-width="1"/><path d="M1 14 L32 14 L37 30 L7 30 Z" fill="#eccb6a" stroke="#c9a03c" stroke-width="1.2"/><path d="M22 18 Q28 6 40 9 L40 3 L51 12 L40 21 L40 15 Q31 13 26 18 Z" fill="#19b386"/></svg>
<svg class="s" style="left:252.8px;top:85.8px;" width="12.199999999999989" height="6.200000000000003" viewBox="0 0 12.199999999999989 6.200000000000003"><path d="M0 0H12.199999999999989L6.099999999999994 6.200000000000003Z" fill="#111"/></svg>
<div class="r" style="left:275.5px;top:66px;width:2.0px;height:37px;background:linear-gradient(to bottom, rgba(200,204,208,0), #c4c8cc 20%, #c4c8cc 80%, rgba(200,204,208,0));"></div>
<svg class="s" style="left:300px;top:72px;" width="34" height="34" viewBox="0 0 34 34"><rect x="1" y="1" width="32" height="32" rx="3" fill="#d4e6f5" stroke="#c3dbef"/><rect x="5" y="2" width="24" height="13" fill="#f3f8fc"/><rect x="8" y="22" width="18" height="11" fill="#eef5fb"/><rect x="11" y="24" width="5" height="9" fill="#d4e6f5"/></svg>
<svg class="s" style="left:356px;top:69px;" width="43" height="38" viewBox="0 0 43 38"><rect x="11" y="1" width="30" height="30" rx="3" fill="#62c6ec" stroke="#4aa7d6"/><rect x="16" y="2" width="20" height="12" fill="#fff"/><rect x="2" y="7" width="29" height="29" rx="3" fill="#6fa8de" stroke="#3f7fc2" stroke-width="1.2"/><rect x="7" y="8" width="19" height="12" fill="#fff"/><rect x="8" y="26" width="15" height="10" fill="#fff"/><rect x="10" y="28" width="4" height="8" fill="#6fa8de"/></svg>
<div class="r" style="left:413.3px;top:66px;width:2.0px;height:37px;background:linear-gradient(to bottom, rgba(200,204,208,0), #c4c8cc 20%, #c4c8cc 80%, rgba(200,204,208,0));"></div>
<svg class="s" style="left:435px;top:66px;" width="40" height="38" viewBox="0 0 40 38"><rect x="9" y="1.5" width="21" height="18" fill="#f5e6c2" stroke="#e6d2a4" stroke-width="0.8"/><rect x="1.5" y="13" width="37" height="19" rx="4" fill="#dfe3ea" stroke="#a9b1bf" stroke-width="1.2"/><line x1="8" y1="18" x2="31" y2="18" stroke="#8a93a3" stroke-width="1.2"/><rect x="5.5" y="31" width="29" height="5.5" rx="1.5" fill="#e6e9ef" stroke="#aab2bf" stroke-width="1"/></svg>
<div class="r" style="left:490px;top:66px;width:2px;height:37px;background:linear-gradient(to bottom, rgba(200,204,208,0), #c4c8cc 20%, #c4c8cc 80%, rgba(200,204,208,0));"></div>
<div class="r" style="left:509px;top:66px;width:364px;height:42px;background:#fff;border:1.5px solid #cfd3d6;border-radius:7px;"></div>
<svg class="s" style="left:526px;top:72px;" width="36" height="34" viewBox="0 0 36 34"><path d="M2 33 C3 18 12 12 20 12 L20 1 L34 16 L20 33 L20 21 C12 20 6 26 2 33 Z" fill="#9aa3b1"/></svg>
<div class="r" style="left:895px;top:67px;width:2px;height:35px;background:linear-gradient(to bottom, rgba(200,204,208,0), #c4c8cc 20%, #c4c8cc 80%, rgba(200,204,208,0));"></div>
<svg class="s" style="left:925px;top:66px;" width="24" height="43" viewBox="0 0 24 43"><rect x="9.4" y="1.4" width="3.6" height="13.4" fill="#23b94a"/><rect x="2" y="6.3" width="20" height="3.7" fill="#23b94a"/><rect x="2" y="16.4" width="20" height="3.6" fill="#e0382c"/><path d="M8 25.1 A8 8 0 1 0 17.7 26.3" fill="none" stroke="#8a9bab" stroke-width="4"/><rect x="12.2" y="22.9" width="9.8" height="2.3" fill="#8a9bab"/><rect x="12.2" y="22.9" width="2.5" height="7.2" fill="#8a9bab"/></svg>
<svg class="s" style="left:973.8px;top:85.8px;" width="13.200000000000045" height="6.700000000000003" viewBox="0 0 13.200000000000045 6.700000000000003"><path d="M0 0H13.200000000000045L6.600000000000023 6.700000000000003Z" fill="#111"/></svg>
<div class="r" style="left:997px;top:66px;width:2px;height:37px;background:linear-gradient(to bottom, rgba(200,204,208,0), #c4c8cc 20%, #c4c8cc 80%, rgba(200,204,208,0));"></div>
<svg class="s" style="left:1018px;top:68px;" width="41" height="38" viewBox="0 0 41 38"><rect x="1" y="1" width="38" height="36" rx="4" fill="#eef0f3" stroke="#a8b2bd" stroke-width="1.4"/><rect x="5" y="4.5" width="13" height="12" rx="2" fill="#eaebee" stroke="#a8b2bd" stroke-width="1.2"/><rect x="21.5" y="4.5" width="13" height="12" rx="2" fill="#eaebee" stroke="#a8b2bd" stroke-width="1.2"/><rect x="5" y="21" width="13" height="12" rx="2" fill="#eaebee" stroke="#a8b2bd" stroke-width="1.2"/><rect x="21.5" y="21" width="13" height="12" rx="2" fill="#eaebee" stroke="#a8b2bd" stroke-width="1.2"/></svg>
<svg class="s" style="left:1077px;top:85.8px;" width="12" height="6.700000000000003" viewBox="0 0 12 6.700000000000003"><path d="M0 0H12L6.0 6.700000000000003Z" fill="#111"/></svg>
<svg class="s" style="left:1222px;top:85.5px;" width="12" height="6.5" viewBox="0 0 12 6.5"><path d="M0 0H12L6.0 6.5Z" fill="#111"/></svg>
<svg class="s" style="left:2322px;top:67px;" width="40" height="39" viewBox="0 0 40 39"><path d="M19 1 L37 8 L37 30 L19 37 L1 30 L1 8 Z" fill="#c0e5f6" stroke="#5bbcd9" stroke-width="1.3"/><path d="M1 8 L19 15 L37 8 M19 15 L19 37" fill="none" stroke="#8dd0e6" stroke-width="1"/><text x="19" y="24" font-family="Liberation Serif,serif" font-size="20" fill="#2a68b5" text-anchor="middle">R</text></svg>
<svg class="s" style="left:2849px;top:85px;" width="13.599999999999909" height="7.599999999999994" viewBox="0 0 13.599999999999909 7.599999999999994"><path d="M0 0H13.599999999999909L6.7999999999999545 7.599999999999994Z" fill="#111"/></svg>
<svg class="s" style="left:43px;top:142px;" width="40" height="40" viewBox="0 0 40 40"><path d="M6 1.5 L27 1.5 L38 12 L38 38 L6 38 Z" fill="#fff" stroke="#b8bcc2" stroke-width="1.2"/><path d="M27 1.5 L27 12 L38 12" fill="#f0f0f0" stroke="#b8bcc2" stroke-width="1.2"/><circle cx="11.5" cy="20.5" r="10.5" fill="#75aadb"/><rect x="10.6" y="10" width="1.8" height="21" fill="#fff"/><rect x="1" y="19.6" width="21" height="1.8" fill="#fff"/></svg>
<svg class="s" style="left:245px;top:155px;" width="18" height="18" viewBox="0 0 18 18"><path d="M2.5 2.5 L15.5 15.5 M15.5 2.5 L2.5 15.5" stroke="#c6cacd" stroke-width="3.2" stroke-linecap="square"/></svg>
<svg class="s" style="left:44.5px;top:207px;" width="37" height="31" viewBox="0 0 37 31"><path d="M1.5 15 L15 1.5 L15 8 L35 8 L35 22 L15 22 L15 28.5 Z" fill="#ebecee" stroke="#bfc2c6" stroke-width="1.4" stroke-linejoin="round"/></svg>
<svg class="s" style="left:87.5px;top:207px;" width="37" height="31" viewBox="0 0 37 31"><path d="M34.5 15 L21 1.5 L21 8 L1 8 L1 22 L21 22 L21 28.5 Z" fill="#f0f2f4" stroke="#dde0e3" stroke-width="1.4" stroke-linejoin="round"/></svg>
<div class="r" style="left:142px;top:198px;width:2px;height:38px;background:linear-gradient(to bottom, rgba(200,204,208,0), #c4c8cc 20%, #c4c8cc 80%, rgba(200,204,208,0));"></div>
<svg class="s" style="left:162px;top:206px;" width="40" height="30" viewBox="0 0 40 30"><rect x="13" y="1" width="25" height="27" rx="4" fill="#f4f6f8" stroke="#9fb3c4" stroke-width="1.2"/><rect x="13.6" y="1.6" width="23.8" height="6" rx="3" fill="#cfe3f6"/><path d="M2 24 L12 14 L9 11 L20 10 L19 21 L16 18 L6 28 Z" fill="#dfe2e6" stroke="#8d99a6" stroke-width="1.1"/></svg>
<div class="r" style="left:220px;top:198px;width:2px;height:38px;background:linear-gradient(to bottom, rgba(200,204,208,0), #c4c8cc 20%, #c4c8cc 80%, rgba(200,204,208,0));"></div>
<svg class="s" style="left:244px;top:205px;" width="34" height="34" viewBox="0 0 34 34"><rect x="1" y="1" width="32" height="32" rx="3" fill="#d4e6f5" stroke="#c3dbef"/><rect x="5" y="2" width="24" height="13" fill="#f3f8fc"/><rect x="8" y="22" width="18" height="11" fill="#eef5fb"/><rect x="11" y="24" width="5" height="9" fill="#d4e6f5"/></svg>
<div class="r" style="left:305px;top:203.5px;width:32px;height:32.0px;background:#fff;border:1.6px solid #a9a9a9;border-radius:7px;"></div>
<div class="r" style="left:572px;top:198px;width:2px;height:38px;background:linear-gradient(to bottom, rgba(200,204,208,0), #c4c8cc 20%, #c4c8cc 80%, rgba(200,204,208,0));"></div>
<svg class="s" style="left:590px;top:199px;" width="48" height="40" viewBox="0 0 48 40"><text x="23" y="16.3" font-family="Liberation Serif,serif" font-weight="bold" font-size="20.5" fill="#b4bcc5" text-anchor="middle">ABC</text><path d="M13.5 32 L19 38 C23 29 28 23 35 20.5 C28 22 23 27 19.5 33 Z" fill="#16a33a" stroke="#16a33a" stroke-width="2.4" stroke-linejoin="round"/></svg>
<svg class="s" style="left:655px;top:202px;" width="38" height="37" viewBox="0 0 38 37"><circle cx="14" cy="14" r="11" fill="#dcecf9" stroke="#8aa1b6" stroke-width="3"/><path d="M22 22 L35 35" stroke="#b86a2c" stroke-width="5" stroke-linecap="round"/></svg>
<div class="r" style="left:709px;top:198px;width:2px;height:38px;background:linear-gradient(to bottom, rgba(200,204,208,0), #c4c8cc 20%, #c4c8cc 80%, rgba(200,204,208,0));"></div>
<svg class="s" style="left:726px;top:205px;" width="40" height="32" viewBox="0 0 40 32"><path d="M21 0 L38 15.5 L21 31 Z" fill="#72a9dc"/><rect x="1" y="8" width="9" height="7" rx="1.5" fill="#72a9dc"/><rect x="11" y="8" width="9" height="7" fill="#72a9dc"/><rect x="1" y="16.5" width="9" height="7" rx="1.5" fill="#72a9dc"/><rect x="11" y="16.5" width="9" height="7" fill="#72a9dc"/></svg>
<svg class="s" style="left:915px;top:218.5px;" width="13" height="8.300000000000011" viewBox="0 0 13 8.300000000000011"><path d="M0 0H13L6.5 8.300000000000011Z" fill="#111"/></svg>
<svg class="s" style="left:956px;top:203px;" width="34" height="34" viewBox="0 0 34 34"><path d="M32.7 13.9 L28.3 19.2 L30.3 25.9 L23.4 26.6 L20.1 32.7 L14.8 28.3 L8.1 30.3 L7.4 23.4 L1.3 20.1 L5.7 14.8 L3.7 8.1 L10.6 7.4 L13.9 1.3 L19.2 5.7 L25.9 3.7 L26.6 10.6Z" fill="#fafafa" stroke="#b8b8b8" stroke-width="1.3" stroke-linejoin="round"/><circle cx="17" cy="17" r="5" fill="#f4f6f8" stroke="#b8b8b8" stroke-width="1.3"/></svg>
<svg class="s" style="left:1010px;top:218.5px;" width="13" height="8.300000000000011" viewBox="0 0 13 8.300000000000011"><path d="M0 0H13L6.5 8.300000000000011Z" fill="#111"/></svg>
<svg class="s" style="left:1034px;top:199px;" width="47" height="39" viewBox="0 0 47 39"><rect x="17" y="7" width="28" height="30" rx="5" fill="#5db85c" stroke="#4aa84a"/><text x="31" y="31" font-family="Liberation Serif,serif" font-size="23" fill="#fff" text-anchor="middle">C</text><circle cx="11" cy="11" r="9.5" fill="#fff" stroke="#d8d8d8"/><rect x="9" y="3.5" width="4.2" height="15" fill="#19b32a"/><rect x="3.5" y="9" width="15" height="4.2" fill="#19b32a"/></svg>
<div class="r" style="left:1094px;top:198px;width:2px;height:38px;background:linear-gradient(to bottom, rgba(200,204,208,0), #c4c8cc 20%, #c4c8cc 80%, rgba(200,204,208,0));"></div>
<svg class="s" style="left:1119px;top:203px;" width="32" height="35" viewBox="0 0 32 35"><path d="M15.5 1.5 L29.5 16 L21 16 L21 32.5 L10 32.5 L10 16 L1.5 16 Z" fill="#fff" stroke="#c2c2c2" stroke-width="1.4" stroke-linejoin="round"/></svg>
<svg class="s" style="left:1179px;top:205px;" width="32" height="35" viewBox="0 0 32 35"><path d="M15.5 33 L29.5 18.5 L21 18.5 L21 1.5 L10 1.5 L10 18.5 L1.5 18.5 Z" fill="#fff" stroke="#c2c2c2" stroke-width="1.4" stroke-linejoin="round"/></svg>
<div class="r" style="left:1230.5px;top:198px;width:2.0px;height:38px;background:linear-gradient(to bottom, rgba(200,204,208,0), #c4c8cc 20%, #c4c8cc 80%, rgba(200,204,208,0));"></div>
<svg class="s" style="left:1251px;top:203px;" width="48" height="32" viewBox="0 0 48 32"><rect x="1.5" y="1.5" width="25.5" height="28.5" rx="4" fill="#fff" stroke="#cfd2d6" stroke-width="1.3"/><rect x="4.5" y="13" width="16.5" height="7" fill="#b9d3f5"/><path d="M23 12.5 L35 12.5 L35 5.5 L47 16.5 L35 27.5 L35 20 L23 20 Z" fill="#0aa858"/></svg>
<svg class="s" style="left:1372px;top:219.2px;" width="11.799999999999955" height="6.800000000000011" viewBox="0 0 11.799999999999955 6.800000000000011"><path d="M0 0H11.799999999999955L5.899999999999977 6.800000000000011Z" fill="#111"/></svg>
<div class="r" style="left:37px;top:256px;width:131px;height:42px;background:#e8e8e8;border:1.5px solid #b9bec3;border-radius:5px;z-index:1;"></div>
<svg class="s" style="left:1217px;top:262px;" width="29" height="25" viewBox="0 0 29 25"><path d="M1 2 H28 M7 8 H28 M1 14 H28 M7 20 H28" stroke="#8c8c8c" stroke-width="2.2"/></svg>
<div class="r" style="left:1368px;top:314px;width:16px;height:172px;background:#c1c1c1;border-radius:8px;"></div>
<div class="r" style="left:162px;top:1386px;width:1.5px;height:39px;background:#d3d7da;"></div>
<div class="r" style="left:1241px;top:1386px;width:1.5px;height:39px;background:#d3d7da;"></div>
<svg class="s" style="left:174px;top:1394px;" width="28" height="25" viewBox="0 0 28 25"><rect x="0" y="0" width="28" height="24.5" rx="4" fill="#d99430"/><text x="14" y="20" font-family="Liberation Sans,sans-serif" font-weight="bold" font-size="21" fill="#fff" text-anchor="middle">#</text></svg>
<svg class="s" style="left:676px;top:1396px;" width="15" height="21" viewBox="0 0 15 21"><path d="M7.5 0.5 L14 7.5 L1 7.5 Z M7.5 20.5 L14 13.5 L1 13.5 Z" fill="#5d666d"/></svg>
<svg class="s" style="left:1361px;top:1396px;" width="15" height="21" viewBox="0 0 15 21"><path d="M7.5 0.5 L14 7.5 L1 7.5 Z M7.5 20.5 L14 13.5 L1 13.5 Z" fill="#5d666d"/></svg>
<svg class="s" style="left:1287px;top:167.5px;" width="36" height="16" viewBox="0 0 36 16"><path d="M1.2 14.799999999999999 L1.2 4.7 Q1.2 1.2 4.7 1.2 L31.300000000000004 1.2 Q34.800000000000004 1.2 34.800000000000004 4.7 L34.800000000000004 14.799999999999999 Z" fill="none" stroke="#87939a" stroke-width="2.4"/><path d="M0 6.5 L0 4 Q0 0 4 0 L32 0 Q36 0 36 4 L36 6.5 Z" fill="#87939a"/></svg>
<svg class="s" style="left:1332px;top:152.5px;" width="36" height="31" viewBox="0 0 36 31"><path d="M1.2 29.8 L1.2 4.7 Q1.2 1.2 4.7 1.2 L31.300000000000004 1.2 Q34.800000000000004 1.2 34.800000000000004 4.7 L34.800000000000004 29.8 Z" fill="none" stroke="#87939a" stroke-width="2.4"/><path d="M0 7.5 L0 4 Q0 0 4 0 L32 0 Q36 0 36 4 L36 7.5 Z" fill="#87939a"/></svg>
<svg class="s" style="left:2757.5px;top:151.5px;" width="37" height="32" viewBox="0 0 37 32"><path d="M10.5 21.0 L10.5 4.7 Q10.5 1.2 14.0 1.2 L32.3 1.2 Q35.8 1.2 35.8 4.7 L35.8 21.0 Z" fill="#e8e9eb" stroke="#87939a" stroke-width="2.4"/><path d="M9.3 6 L9.3 4 Q9.3 0 13.3 0 L33.0 0 Q37.0 0 37.0 4 L37.0 6 Z" fill="#87939a"/><path d="M1.2 30.8 L1.2 13.5 Q1.2 10 4.7 10 L23.0 10 Q26.5 10 26.5 13.5 L26.5 30.8 Z" fill="#e8e9eb" stroke="#87939a" stroke-width="2.4"/><path d="M0 14.8 L0 12.8 Q0 8.8 4 8.8 L23.7 8.8 Q27.7 8.8 27.7 12.8 L27.7 14.8 Z" fill="#87939a"/></svg>
<svg class="s" style="left:2803px;top:152.5px;" width="36" height="31" viewBox="0 0 36 31"><path d="M1.2 29.8 L1.2 4.7 Q1.2 1.2 4.7 1.2 L31.300000000000004 1.2 Q34.800000000000004 1.2 34.800000000000004 4.7 L34.800000000000004 29.8 Z" fill="none" stroke="#87939a" stroke-width="2.4"/><path d="M0 7.5 L0 4 Q0 0 4 0 L32 0 Q36 0 36 4 L36 7.5 Z" fill="#87939a"/></svg>
<svg class="s" style="left:2757px;top:252.5px;" width="36" height="16" viewBox="0 0 36 16"><path d="M1.2 14.799999999999999 L1.2 4.7 Q1.2 1.2 4.7 1.2 L31.300000000000004 1.2 Q34.800000000000004 1.2 34.800000000000004 4.7 L34.800000000000004 14.799999999999999 Z" fill="none" stroke="#87939a" stroke-width="2.4"/><path d="M0 6.5 L0 4 Q0 0 4 0 L32 0 Q36 0 36 4 L36 6.5 Z" fill="#87939a"/></svg>
<svg class="s" style="left:2802px;top:236.5px;" width="37" height="32" viewBox="0 0 37 32"><path d="M10.5 21.0 L10.5 4.7 Q10.5 1.2 14.0 1.2 L32.3 1.2 Q35.8 1.2 35.8 4.7 L35.8 21.0 Z" fill="#e8e9eb" stroke="#87939a" stroke-width="2.4"/><path d="M9.3 6 L9.3 4 Q9.3 0 13.3 0 L33.0 0 Q37.0 0 37.0 4 L37.0 6 Z" fill="#87939a"/><path d="M1.2 30.8 L1.2 13.5 Q1.2 10 4.7 10 L23.0 10 Q26.5 10 26.5 13.5 L26.5 30.8 Z" fill="#e8e9eb" stroke="#87939a" stroke-width="2.4"/><path d="M0 14.8 L0 12.8 Q0 8.8 4 8.8 L23.7 8.8 Q27.7 8.8 27.7 12.8 L27.7 14.8 Z" fill="#87939a"/></svg>
<svg class="s" style="left:1287px;top:1478.5px;" width="36" height="16" viewBox="0 0 36 16"><path d="M1.2 14.799999999999999 L1.2 4.7 Q1.2 1.2 4.7 1.2 L31.300000000000004 1.2 Q34.800000000000004 1.2 34.800000000000004 4.7 L34.800000000000004 14.799999999999999 Z" fill="none" stroke="#87939a" stroke-width="2.4"/><path d="M0 6.5 L0 4 Q0 0 4 0 L32 0 Q36 0 36 4 L36 6.5 Z" fill="#87939a"/></svg>
<svg class="s" style="left:1332px;top:1463.5px;" width="36" height="31" viewBox="0 0 36 31"><path d="M1.2 29.8 L1.2 4.7 Q1.2 1.2 4.7 1.2 L31.300000000000004 1.2 Q34.800000000000004 1.2 34.800000000000004 4.7 L34.800000000000004 29.8 Z" fill="none" stroke="#87939a" stroke-width="2.4"/><path d="M0 7.5 L0 4 Q0 0 4 0 L32 0 Q36 0 36 4 L36 7.5 Z" fill="#87939a"/></svg>
<svg class="s" style="left:342px;top:1465px;" width="19" height="19" viewBox="0 0 19 19"><path d="M3 3 L16 16 M16 3 L3 16" stroke="#c6cacd" stroke-width="3.2" stroke-linecap="square"/></svg>
<svg class="s" style="left:661px;top:1465px;" width="19" height="19" viewBox="0 0 19 19"><path d="M3 3 L16 16 M16 3 L3 16" stroke="#c6cacd" stroke-width="3.2" stroke-linecap="square"/></svg>
<svg class="s" style="left:1429.5px;top:289px;" width="37" height="35" viewBox="0 0 37 35"><defs><linearGradient id="ga" x1="0" y1="0" x2="1" y2="1"><stop offset="0" stop-color="#c2e3f7"/><stop offset="1" stop-color="#93c6e8"/></linearGradient></defs><path d="M1 17.5 L20.720000000000002 1 L20.720000000000002 9.450000000000001 L36 9.450000000000001 L36 25.55 L20.720000000000002 25.55 L20.720000000000002 34 Z" fill="url(#ga)" stroke="#5a95b5" stroke-width="1.3" stroke-linejoin="round"/></svg>
<svg class="s" style="left:1493.5px;top:289px;" width="37" height="35" viewBox="0 0 37 35"><defs><linearGradient id="ga" x1="0" y1="0" x2="1" y2="1"><stop offset="0" stop-color="#c2e3f7"/><stop offset="1" stop-color="#93c6e8"/></linearGradient></defs><path d="M36 17.5 L16.279999999999998 1 L16.279999999999998 9.450000000000001 L1 9.450000000000001 L1 25.55 L16.279999999999998 25.55 L16.279999999999998 34 Z" fill="url(#ga)" stroke="#5a95b5" stroke-width="1.3" stroke-linejoin="round"/></svg>
<div class="r" style="left:1546.3px;top:284px;width:2.0px;height:38px;background:linear-gradient(to bottom, rgba(200,204,208,0), #c4c8cc 20%, #c4c8cc 80%, rgba(200,204,208,0));"></div>
<div class="r" style="left:1577.5px;top:291px;width:28.5px;height:31.5px;background:#fff;border:1.2px solid #cdd3dc;"></div>
<svg class="s" style="left:1563px;top:287px;" width="28" height="28" viewBox="0 0 28 28"><circle cx="14" cy="14" r="12.5" fill="#c2211f"/><path d="M8.5 8.5 L19.5 19.5 M19.5 8.5 L8.5 19.5" stroke="#fff" stroke-width="4.2"/></svg>
<div class="r" style="left:1624px;top:284px;width:2px;height:38px;background:linear-gradient(to bottom, rgba(200,204,208,0), #c4c8cc 20%, #c4c8cc 80%, rgba(200,204,208,0));"></div>
<svg class="s" style="left:1644px;top:291px;" width="39" height="29" viewBox="0 0 39 29"><rect x="11" y="1" width="26.5" height="26.5" rx="4" fill="#f6f8fb" stroke="#a7b6c4" stroke-width="1.1"/><rect x="11.6" y="1.6" width="25.3" height="6" rx="3" fill="#d2e6f8"/><path d="M2 23 L10 15 L7 12 L17 11 L16 21 L13 18 L5 26 Z" fill="#dfe2e6" stroke="#8d99a6" stroke-width="1.1"/></svg>
<div class="r" style="left:1701px;top:284px;width:2px;height:38px;background:linear-gradient(to bottom, rgba(200,204,208,0), #c4c8cc 20%, #c4c8cc 80%, rgba(200,204,208,0));"></div>
<div class="r" style="left:1727px;top:291px;width:29px;height:31.5px;background:#fff;border:1.2px solid #cdd3dc;"></div>
<svg class="s" style="left:1742px;top:288px;" width="26" height="26" viewBox="0 0 26 26"><path d="M3 23 L20 5" stroke="#e3b53f" stroke-width="4.5" stroke-linecap="butt"/><path d="M19 6 L21.5 3.5" stroke="#3aa05a" stroke-width="4.5"/><path d="M21.5 3.5 L23.5 1.5" stroke="#d0202a" stroke-width="4.5"/><path d="M1.5 24.5 L4 21.5" stroke="#555" stroke-width="2"/></svg>
<div class="r" style="left:1864.4px;top:288.3px;width:32.59999999999991px;height:32.30000000000001px;background:#fff;border:1.6px solid #a9a9a9;border-radius:7px;"></div>
<svg class="s" style="left:2587px;top:290px;" width="42" height="32" viewBox="0 0 42 32"><circle cx="20.5" cy="15.5" r="5.3" fill="#1a9be0"/><path d="M0.5 11.5 L9 11.5 A12 12 0 0 1 29 5" fill="none" stroke="#1a9be0" stroke-width="4.5"/><path d="M40.5 19.5 L32 19.5 A12 12 0 0 1 11 27" fill="none" stroke="#1a9be0" stroke-width="4.5"/></svg>
<svg class="s" style="left:2760px;top:303.8px;" width="13" height="5.899999999999977" viewBox="0 0 13 5.899999999999977"><path d="M0 0H13L6.5 5.899999999999977Z" fill="#111"/></svg>
<div class="r" style="left:2793.4px;top:284px;width:2.0px;height:36px;background:linear-gradient(to bottom, rgba(200,204,208,0), #c4c8cc 20%, #c4c8cc 80%, rgba(200,204,208,0));"></div>
<svg class="s" style="left:2810px;top:283px;" width="38" height="40" viewBox="0 0 38 40"><path d="M29 28 A13 13 0 1 1 25.5 9.5" fill="none" stroke="#bcc6d2" stroke-width="8"/><path d="M29 28 A13 13 0 1 1 25.5 9.5" fill="none" stroke="#e9eef5" stroke-width="5"/><path d="M19 14.5 L35.5 1.5 L35.5 17 Z" fill="#e6ecf4" stroke="#bcc6d2" stroke-width="1.4" stroke-linejoin="round"/></svg>
<svg class="s" style="left:40px;top:1517px;" width="38" height="32" viewBox="0 0 38 32"><defs><linearGradient id="ga" x1="0" y1="0" x2="1" y2="1"><stop offset="0" stop-color="#c2e3f7"/><stop offset="1" stop-color="#93c6e8"/></linearGradient></defs><path d="M1.5 15.5 L18 1.5 L18 8 L36.5 8 L36.5 23.5 L18 23.5 L18 30 Z" fill="url(#ga)" stroke="#5a95b5" stroke-width="1.3" stroke-linejoin="round"/></svg>
<svg class="s" style="left:1232px;top:1512px;" width="35" height="35" viewBox="0 0 35 35"><path d="M10.5 1 L24.5 1 L34 10.5 L34 24.5 L24.5 34 L10.5 34 L1 24.5 L1 10.5 Z" fill="#e04a5a" stroke="#c23040" stroke-width="1.2"/><text x="17.5" y="21.5" font-family="Liberation Sans,sans-serif" font-size="11" fill="#f6c6cc" text-anchor="middle">STOP</text></svg>
<div class="r" style="left:1368px;top:1765px;width:16px;height:20px;background:#c1c1c1;border-radius:8px;"></div>
<svg class="s" style="left:1712px;top:555px;" width="32" height="32" viewBox="0 0 32 32"><circle cx="16" cy="16" r="15.5" fill="#a6ce39"/><rect x="9" y="12" width="2.6" height="11" fill="#fff"/><circle cx="10.3" cy="8.8" r="1.6" fill="#fff"/><path d="M14.5 12 L18.5 12 A5.5 5.5 0 0 1 18.5 23 L14.5 23 Z" fill="none" stroke="#fff" stroke-width="2.3"/></svg>
<svg class="s" style="left:1747px;top:616.5px;" width="32" height="32" viewBox="0 0 32 32"><circle cx="16" cy="16" r="15.5" fill="#a6ce39"/><rect x="9" y="12" width="2.6" height="11" fill="#fff"/><circle cx="10.3" cy="8.8" r="1.6" fill="#fff"/><path d="M14.5 12 L18.5 12 A5.5 5.5 0 0 1 18.5 23 L14.5 23 Z" fill="none" stroke="#fff" stroke-width="2.3"/></svg>
<div class="r" style="left:2776px;top:432px;width:57px;height:1353px;background:#e9e9e9;"></div>
<div class="r" style="left:2833px;top:333px;width:27px;height:1452px;background:#f8f8f8;border-left:1px solid #ececec;"></div>
<div class="r" style="left:2839px;top:339px;width:16px;height:228px;background:#c1c1c1;border-radius:8px;"></div>
<div class="r" style="left:2749.5px;top:332px;width:82.5px;height:100.5px;background:#fff;border-left:2px solid #dcdcdc;border-bottom:2px solid #dcdcdc;"></div>
<svg class="s" style="left:2778px;top:367px;" width="20" height="28" viewBox="0 0 20 28"><path d="M15 3 L5 13.5 L15 24" fill="none" stroke="#9a9a9a" stroke-width="4.2" stroke-linecap="round" stroke-linejoin="round"/></svg>
<div class="r" style="left:2750px;top:454px;width:73px;height:73px;background:#fff;border:1.6px solid #dcdcdc;border-radius:9px;box-shadow:1px 2px 2px rgba(0,0,0,0.08);"></div>
<svg class="s" style="left:2765px;top:474px;" width="42" height="32" viewBox="0 0 42 32"><ellipse cx="21" cy="16" rx="18.5" ry="12.5" fill="none" stroke="#707070" stroke-width="4"/><circle cx="21" cy="16" r="4.6" fill="#707070"/></svg>
<div class="r" style="left:2750px;top:544px;width:73px;height:73px;background:#fff;border:1.6px solid #dcdcdc;border-radius:9px;box-shadow:1px 2px 2px rgba(0,0,0,0.08);"></div>
<svg class="s" style="left:2765px;top:560px;" width="42" height="42" viewBox="0 0 42 42"><path d="M6 2.5 L34 2.5 Q37.5 2.5 37.5 6 L37.5 21.5 L21.5 37.5 L6 37.5 Q2.5 37.5 2.5 34 L2.5 6 Q2.5 2.5 6 2.5 Z" fill="none" stroke="#707070" stroke-width="4" stroke-linejoin="round"/><path d="M37.5 21.5 L21.5 21.5 L21.5 37.5" fill="none" stroke="#707070" stroke-width="4" stroke-linejoin="round"/></svg>
</body></html>
